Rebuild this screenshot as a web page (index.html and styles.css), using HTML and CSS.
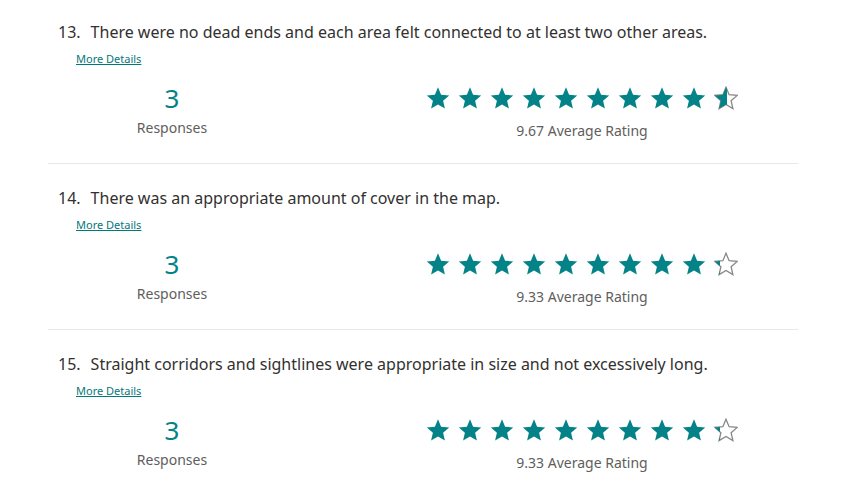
FILE: index.html
```html
<!DOCTYPE html>
<html>
<head>
<meta charset="utf-8">
<link rel="stylesheet" href="styles.css">
</head>
<body>
<svg width="0" height="0" class="defs">
  <defs>
    <polygon id="star" points="12,1.2 15.1,8.7 23.2,9.4 17.1,14.7 18.9,22.6 12,18.4 5.1,22.6 6.9,14.7 0.8,9.4 8.9,8.7"/>
  </defs>
</svg>
<main class="list">
  <section class="item">
    <h2 class="question"><span class="num">13.</span>There were no dead ends and each area felt connected to at least two other areas.</h2>
    <a class="details" href="#">More Details</a>
    <div class="stats">
      <div class="responses"><div class="count">3</div><div class="label">Responses</div></div>
      <div class="rating">
        <div class="stars">
          <svg class="star" viewBox="0 0 24 24"><use href="#star"/></svg>
          <svg class="star" viewBox="0 0 24 24"><use href="#star"/></svg>
          <svg class="star" viewBox="0 0 24 24"><use href="#star"/></svg>
          <svg class="star" viewBox="0 0 24 24"><use href="#star"/></svg>
          <svg class="star" viewBox="0 0 24 24"><use href="#star"/></svg>
          <svg class="star" viewBox="0 0 24 24"><use href="#star"/></svg>
          <svg class="star" viewBox="0 0 24 24"><use href="#star"/></svg>
          <svg class="star" viewBox="0 0 24 24"><use href="#star"/></svg>
          <svg class="star" viewBox="0 0 24 24"><use href="#star"/></svg>
          <span class="partial">
            <svg class="star empty" viewBox="0 0 24 24"><use href="#star"/></svg>
            <span class="fill" style="width:56%"><svg class="star" viewBox="0 0 24 24"><use href="#star"/></svg></span>
          </span>
        </div>
        <div class="avg">9.67 Average Rating</div>
      </div>
    </div>
  </section>
  <section class="item">
    <h2 class="question"><span class="num">14.</span>There was an appropriate amount of cover in the map.</h2>
    <a class="details" href="#">More Details</a>
    <div class="stats">
      <div class="responses"><div class="count">3</div><div class="label">Responses</div></div>
      <div class="rating">
        <div class="stars">
          <svg class="star" viewBox="0 0 24 24"><use href="#star"/></svg>
          <svg class="star" viewBox="0 0 24 24"><use href="#star"/></svg>
          <svg class="star" viewBox="0 0 24 24"><use href="#star"/></svg>
          <svg class="star" viewBox="0 0 24 24"><use href="#star"/></svg>
          <svg class="star" viewBox="0 0 24 24"><use href="#star"/></svg>
          <svg class="star" viewBox="0 0 24 24"><use href="#star"/></svg>
          <svg class="star" viewBox="0 0 24 24"><use href="#star"/></svg>
          <svg class="star" viewBox="0 0 24 24"><use href="#star"/></svg>
          <svg class="star" viewBox="0 0 24 24"><use href="#star"/></svg>
          <span class="partial">
            <svg class="star empty" viewBox="0 0 24 24"><use href="#star"/></svg>
            <span class="fill" style="width:24%"><svg class="star" viewBox="0 0 24 24"><use href="#star"/></svg></span>
          </span>
        </div>
        <div class="avg">9.33 Average Rating</div>
      </div>
    </div>
  </section>
  <section class="item">
    <h2 class="question"><span class="num">15.</span>Straight corridors and sightlines were appropriate in size and not excessively long.</h2>
    <a class="details" href="#">More Details</a>
    <div class="stats">
      <div class="responses"><div class="count">3</div><div class="label">Responses</div></div>
      <div class="rating">
        <div class="stars">
          <svg class="star" viewBox="0 0 24 24"><use href="#star"/></svg>
          <svg class="star" viewBox="0 0 24 24"><use href="#star"/></svg>
          <svg class="star" viewBox="0 0 24 24"><use href="#star"/></svg>
          <svg class="star" viewBox="0 0 24 24"><use href="#star"/></svg>
          <svg class="star" viewBox="0 0 24 24"><use href="#star"/></svg>
          <svg class="star" viewBox="0 0 24 24"><use href="#star"/></svg>
          <svg class="star" viewBox="0 0 24 24"><use href="#star"/></svg>
          <svg class="star" viewBox="0 0 24 24"><use href="#star"/></svg>
          <svg class="star" viewBox="0 0 24 24"><use href="#star"/></svg>
          <span class="partial">
            <svg class="star empty" viewBox="0 0 24 24"><use href="#star"/></svg>
            <span class="fill" style="width:24%"><svg class="star" viewBox="0 0 24 24"><use href="#star"/></svg></span>
          </span>
        </div>
        <div class="avg">9.33 Average Rating</div>
      </div>
    </div>
  </section>
</main>
</body>
</html>
```
FILE: styles.css
```css
html, body {
  margin: 0;
  padding: 0;
  background: #ffffff;
}
body {
  font-family: "Noto Sans", "Open Sans", sans-serif;
  color: #323130;
  overflow: hidden;
}
.defs {
  position: absolute;
  width: 0;
  height: 0;
}
.list {
  width: 750px;
  margin-left: 48px;
}
.item {
  padding: 23px 0 22px 0;
  border-bottom: 1px solid #e8e8e8;
}
.item:first-child {
  padding-top: 21px;
}
.question {
  margin: 0 0 0 10px;
  font-size: 16px;
  font-weight: normal;
  line-height: 22px;
  white-space: nowrap;
}
.num {
  margin-right: 10px;
}
.details {
  display: block;
  margin: 8px 0 0 28px;
  font-size: 11px;
  line-height: 16px;
  color: #03787c;
  text-decoration: underline;
  width: max-content;
}
.stats {
  display: grid;
  grid-template-columns: 248px 1fr;
  margin-top: 15px;
}
.responses {
  display: flex;
  flex-direction: column;
  align-items: center;
}
.count {
  font-size: 26px;
  line-height: 32px;
  color: #038387;
}
.label {
  margin-top: 4px;
  font-size: 14px;
  line-height: 20px;
  color: #605e5c;
}
.rating {
  padding-left: 70px;
  display: flex;
  flex-direction: column;
  align-items: center;
}
.stars {
  display: flex;
  gap: 8px;
  margin-top: 4px;
}
.star {
  width: 24px;
  height: 24px;
  display: block;
  fill: #038387;
}
.star.empty {
  fill: #ffffff;
  stroke: #8a8886;
  stroke-width: 1.3;
}
.partial {
  position: relative;
  width: 24px;
  height: 24px;
  display: block;
}
.fill {
  position: absolute;
  left: 0;
  top: 0;
  height: 24px;
  overflow: hidden;
}
.avg {
  margin-top: 11px;
  font-size: 14px;
  line-height: 20px;
  color: #605e5c;
}
```
